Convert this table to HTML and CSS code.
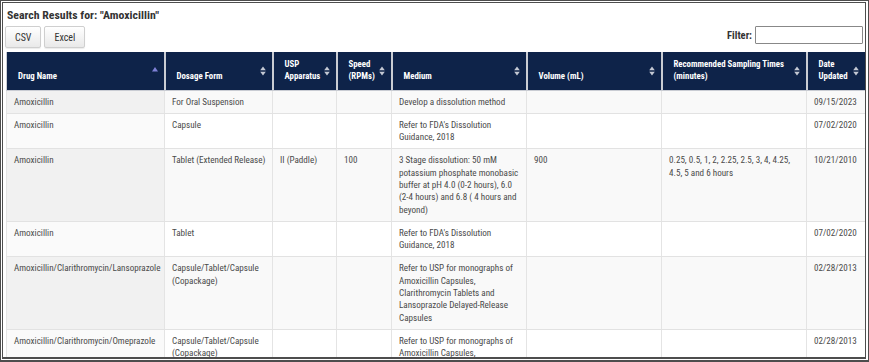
FILE: index.html
```html
<!DOCTYPE html>
<html>
<head>
<meta charset="utf-8">
<link rel="stylesheet" href="styles.css">
</head>
<body>
<div class="frame">
  <div class="title">Search Results for: "Amoxicillin"</div>
  <div class="toolbar">
    <div class="buttons">
      <button class="btn">CSV</button>
      <button class="btn">Excel</button>
    </div>
    <label class="filter">Filter: <input type="text" class="filter-input"></label>
  </div>
  <table class="results">
    <colgroup>
      <col class="c1"><col class="c2"><col class="c3"><col class="c4"><col class="c5"><col class="c6"><col class="c7"><col class="c8">
    </colgroup>
    <thead>
      <tr>
        <th>Drug Name<svg class="sort asc" viewBox="0 0 8 10"><path d="M4 2 L7 6.5 L1 6.5 Z"/></svg></th>
        <th>Dosage Form<svg class="sort" viewBox="0 0 8 10"><path d="M4 0.5 L6.8 4.2 L1.2 4.2 Z M4 9.5 L6.8 5.8 L1.2 5.8 Z"/></svg></th>
        <th>USP Apparatus<svg class="sort" viewBox="0 0 8 10"><path d="M4 0.5 L6.8 4.2 L1.2 4.2 Z M4 9.5 L6.8 5.8 L1.2 5.8 Z"/></svg></th>
        <th>Speed (RPMs)<svg class="sort" viewBox="0 0 8 10"><path d="M4 0.5 L6.8 4.2 L1.2 4.2 Z M4 9.5 L6.8 5.8 L1.2 5.8 Z"/></svg></th>
        <th>Medium<svg class="sort" viewBox="0 0 8 10"><path d="M4 0.5 L6.8 4.2 L1.2 4.2 Z M4 9.5 L6.8 5.8 L1.2 5.8 Z"/></svg></th>
        <th>Volume (mL)<svg class="sort" viewBox="0 0 8 10"><path d="M4 0.5 L6.8 4.2 L1.2 4.2 Z M4 9.5 L6.8 5.8 L1.2 5.8 Z"/></svg></th>
        <th>Recommended Sampling Times (minutes)<svg class="sort" viewBox="0 0 8 10"><path d="M4 0.5 L6.8 4.2 L1.2 4.2 Z M4 9.5 L6.8 5.8 L1.2 5.8 Z"/></svg></th>
        <th>Date Updated<svg class="sort" viewBox="0 0 8 10"><path d="M4 0.5 L6.8 4.2 L1.2 4.2 Z M4 9.5 L6.8 5.8 L1.2 5.8 Z"/></svg></th>
      </tr>
    </thead>
    <tbody>
      <tr class="odd">
        <td>Amoxicillin</td><td>For Oral Suspension</td><td></td><td></td><td>Develop a dissolution method</td><td></td><td></td><td>09/15/2023</td>
      </tr>
      <tr class="even">
        <td>Amoxicillin</td><td>Capsule</td><td></td><td></td><td>Refer to FDA's Dissolution Guidance, 2018</td><td></td><td></td><td>07/02/2020</td>
      </tr>
      <tr class="odd">
        <td>Amoxicillin</td><td>Tablet (Extended Release)</td><td>II (Paddle)</td><td>100</td><td>3 Stage dissolution: 50 mM potassium phosphate monobasic buffer at pH 4.0 (0-2 hours), 6.0 (2-4 hours) and 6.8 ( 4 hours and beyond)</td><td>900</td><td>0.25, 0.5, 1, 2, 2.25, 2.5, 3, 4, 4.25, 4.5, 5 and 6 hours</td><td>10/21/2010</td>
      </tr>
      <tr class="even">
        <td>Amoxicillin</td><td>Tablet</td><td></td><td></td><td>Refer to FDA's Dissolution Guidance, 2018</td><td></td><td></td><td>07/02/2020</td>
      </tr>
      <tr class="odd">
        <td>Amoxicillin/Clarithromycin/Lansoprazole</td><td>Capsule/Tablet/Capsule (Copackage)</td><td></td><td></td><td>Refer to USP for monographs of Amoxicillin Capsules, Clarithromycin Tablets and Lansoprazole Delayed-Release Capsules</td><td></td><td></td><td>02/28/2013</td>
      </tr>
      <tr class="even">
        <td>Amoxicillin/Clarithromycin/Omeprazole</td><td>Capsule/Tablet/Capsule (Copackage)</td><td></td><td></td><td>Refer to USP for monographs of Amoxicillin Capsules, Clarithromycin Tablets and Omeprazole Delayed-Release Capsules</td><td></td><td></td><td>02/28/2013</td>
      </tr>
    </tbody>
  </table>
</div>
</body>
</html>
```
FILE: styles.css
```css
html, body {
  margin: 0;
  padding: 0;
  background: #ffffff;
}
.frame {
  box-sizing: border-box;
  width: 869px;
  height: 362px;
  overflow: hidden;
  border-style: double;
  border-color: #4d4d4d;
  border-width: 3px 4px 5px 3px;
  padding: 5px 1px 0 3px;
  font-family: "Roboto Condensed", "Liberation Sans Narrow", "DejaVu Sans Condensed", "Roboto", sans-serif;
  color: #444;
}
.title {
  font-size: 11.8px;
  font-weight: bold;
  color: #333;
  line-height: 14px;
  padding-left: 1px;
}
.toolbar {
  display: flex;
  justify-content: space-between;
  align-items: flex-start;
  margin-top: 4px;
  height: 26px;
}
.buttons {
  display: flex;
  gap: 3px;
  margin-left: -1px;
}
.btn {
  font-family: inherit;
  font-size: 10px;
  color: #333;
  height: 22px;
  padding: 0 9px;
  border: 1px solid #cfcfcf;
  border-radius: 2px;
  background: linear-gradient(#ffffff, #e9e9e9);
  box-shadow: 0 1px 1px rgba(0,0,0,0.08);
}
.filter {
  font-size: 10.5px;
  font-weight: bold;
  color: #333;
  display: flex;
  align-items: center;
  gap: 3px;
  margin-right: 1px;
}
.filter-input {
  box-sizing: border-box;
  width: 108px;
  height: 18px;
  border: 1px solid #888;
  border-radius: 1px;
  margin: 0;
}
.results {
  table-layout: fixed;
  border-collapse: collapse;
  width: 858px;
  font-size: 9.1px;
}
.c1 { width: 158px; }
.c2 { width: 108px; }
.c3 { width: 64px; }
.c4 { width: 55px; }
.c5 { width: 135px; }
.c6 { width: 135px; }
.c7 { width: 145px; }
.c8 { width: 58px; }
.results thead th {
  position: relative;
  background: #0e2349;
  color: #ffffff;
  font-weight: bold;
  font-size: 8.8px;
  text-align: left;
  vertical-align: bottom;
  height: 38px;
  box-sizing: border-box;
  padding: 0 16px 7px 11px;
  line-height: 12.5px;
  border-left: 2px solid #c9ccd3;
  border-bottom: 1px solid #c9ccd3;
}
.results thead th:first-child {
  border-left: 1px solid #c9ccd3;
}
.sort {
  position: absolute;
  right: 5px;
  top: 14px;
  width: 8px;
  height: 10px;
  fill: #c3c8d3;
}
.sort.asc {
  fill: #7e81d6;
  top: 13px;
}
.results tbody td {
  vertical-align: top;
  padding: 5px 4px 5px 7px;
  line-height: 12.3px;
  border-left: 1px solid #e4e4e4;
  border-bottom: 1px solid #e2e2e2;
  color: #4a4a4a;
}
.results tbody tr.odd td { background: #f9f9f9; }
.results tbody tr.odd td:first-child { background: #f1f1f1; }
.results tbody tr.even td { background: #ffffff; }
.results tbody tr.even td:first-child { background: #fafafa; }
```
